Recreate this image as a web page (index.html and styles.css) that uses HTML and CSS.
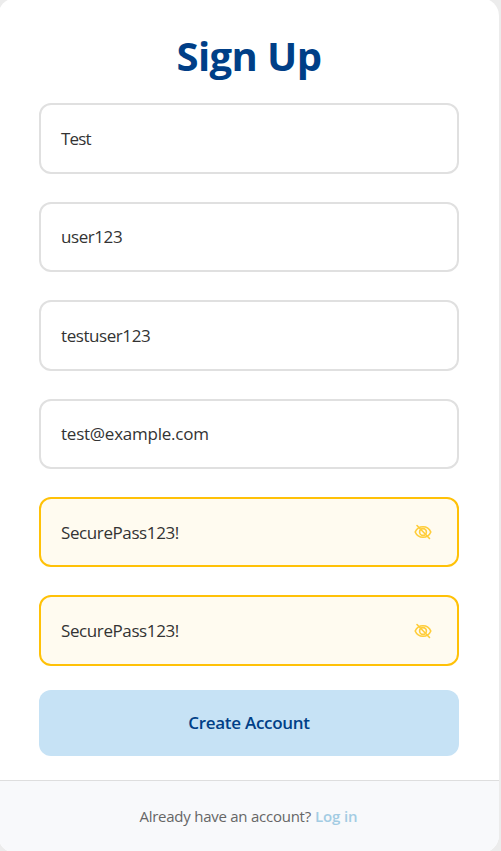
FILE: index.html
```html
<!DOCTYPE html>
<html lang="en">
<head>
<meta charset="utf-8">
<title>Sign Up</title>
<link rel="stylesheet" href="styles.css">
</head>
<body>
<main class="card">
  <form class="form">
    <h1 class="title">Sign Up</h1>
    <div class="field"><span class="v-name">Test</span></div>
    <div class="field"><span class="v-user">user123</span></div>
    <div class="field"><span class="v-login">testuser123</span></div>
    <div class="field"><span class="v-mail">test@example.com</span></div>
    <div class="field secret"><span class="v-pass">SecurePass123!</span>
      <svg class="eye" viewBox="0 0 18 16"><path d="M1.2 8C2.6 4.6 5.6 2.7 9 2.7S15.400 4.600 16.800 8C15.400 11.400 12.400 13.300 9 13.300S2.600 11.400 1.200 8Z"/><circle cx="9" cy="8" r="3.400"/><path d="M3 1.500 15.500 14.500"/></svg>
    </div>
    <div class="field secret"><span class="v-pass">SecurePass123!</span>
      <svg class="eye" viewBox="0 0 18 16"><path d="M1.2 8C2.6 4.6 5.6 2.7 9 2.7S15.400 4.600 16.800 8C15.400 11.400 12.400 13.300 9 13.300S2.600 11.400 1.200 8Z"/><circle cx="9" cy="8" r="3.400"/><path d="M3 1.500 15.500 14.500"/></svg>
    </div>
    <button class="submit" type="button"><span>Create Account</span></button>
  </form>
  <footer class="footer"><span class="prompt">Already have an account?</span><a class="login">Log in</a></footer>
</main>
</body>
</html>
```
FILE: styles.css
```css
* { box-sizing: border-box; }
html { height: 100%; overflow: hidden; background: #ececec; }
body { margin: 0; height: 100%; overflow: hidden; font-family: "Open Sans", "Noto Sans", sans-serif; }
.card { width: 501px; height: 855px; margin: -2px 0 0 -2px; border-radius: 18px; overflow: hidden; background: #fff; display: flex; flex-direction: column; }
.form { height: 782px; padding: 31px 40px 0 41px; display: flex; flex-direction: column; }
.title { margin: 0 0 20.4px; height: 54px; line-height: 54px; font-size: 40px; font-weight: 700; color: #003f87; text-align: center; letter-spacing: -.6px; }
.field { height: 70.4px; margin-bottom: 28px; flex: none; border: 2px solid #e0e0e0; border-radius: 12px; padding: 0 25px 0 20px; display: flex; align-items: center; justify-content: space-between; font-size: 17px; color: #333; white-space: nowrap; }
.v-name { letter-spacing: -.8px; }
.v-user, .v-login { letter-spacing: -.43px; }
.v-mail { letter-spacing: -.23px; }
.v-pass { letter-spacing: -.4px; }
.secret { border-color: #ffc107; background: #fffbf0; }
.eye { width: 18px; height: 16px; fill: none; stroke: #ffcd39; stroke-width: 1.6; stroke-linecap: round; }
.submit { flex: none; height: 66px; margin-top: -3.8px; padding: 0; border: 0; border-radius: 12px; background: #c6e2f5; color: #003f87; font: 600 17px "Open Sans", sans-serif; letter-spacing: -.28px; }
.footer { flex: 1; border-top: 1px solid #dedede; background: #f8f9fb; display: flex; justify-content: center; align-items: center; gap: 4px; padding-bottom: 2px; font-size: 15px; color: #666; white-space: nowrap; }
.prompt { letter-spacing: -.25px; }
.login { color: #a3cce3; font-weight: 600; letter-spacing: -.1px; }
```
